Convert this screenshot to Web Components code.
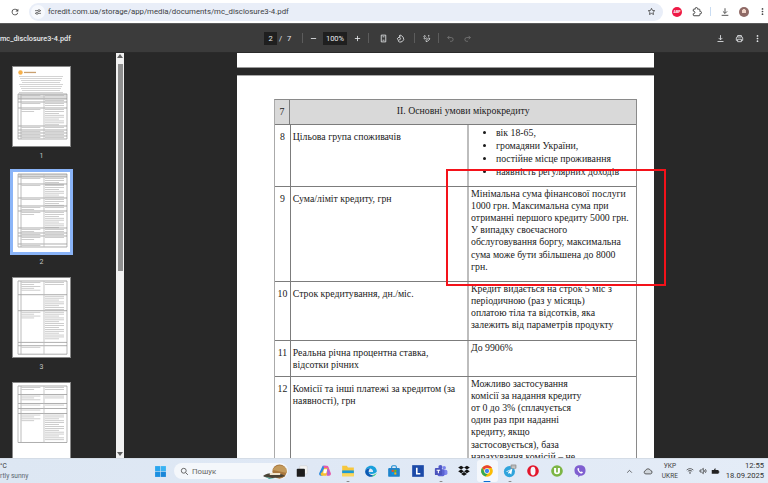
<!DOCTYPE html>
<html>
<head>
<meta charset="utf-8">
<title>mc_disclosure3-4.pdf</title>
<style>
  html, body { margin: 0; height: 100%; overflow: hidden; background: #282828; }
  body { font-family: Roboto, "Noto Sans", sans-serif; }
  svg { display: block; }
</style>
</head>
<body>
<app-shell>
  <browser-bar slot="browser" url="fcredit.com.ua/storage/app/media/documents/mc_disclosure3-4.pdf"></browser-bar>
  <pdf-toolbar slot="toolbar" file="mc_disclosure3-4.pdf" page="2" pages="7" zoom="100%"></pdf-toolbar>
  <thumb-rail slot="rail">
    <pdf-thumb label="1" kind="cover"></pdf-thumb>
    <pdf-thumb label="2" kind="terms" selected></pdf-thumb>
    <pdf-thumb label="3" kind="costs"></pdf-thumb>
    <pdf-thumb label="4" kind="rest"></pdf-thumb>
  </thumb-rail>
  <pdf-page slot="main">
    <credit-table title-num="7" title-text="ІІ. Основні умови мікрокредиту">
      <credit-row num="8" h="62">
        <span slot="label">Цільова група споживачів</span>
        <ul slot="value">
          <li>вік 18-65,</li>
          <li>громадяни України,</li>
          <li>постійне місце проживання</li>
          <li>наявність регулярних доходів</li>
        </ul>
      </credit-row>
      <credit-row num="9" h="95">
        <span slot="label">Сума/ліміт кредиту, грн</span>
        <span slot="value">Мінімальна сума фінансової послуги<br>1000 грн. Максимальна сума при<br>отриманні першого кредиту 5000 грн.<br>У випадку своєчасного<br>обслуговування боргу, максимальна<br>сума може бути збільшена до 8000<br>грн.</span>
      </credit-row>
      <credit-row num="10" h="59">
        <span slot="label">Строк кредитування, дн./міс.</span>
        <span slot="value">Кредит видається на строк 5 міс з<br>періодичною (раз у місяць)<br>оплатою тіла та відсотків, яка<br>залежить від параметрів продукту</span>
      </credit-row>
      <credit-row num="11" h="36">
        <span slot="label">Реальна річна процентна ставка,<br>відсотки річних</span>
        <span slot="value">До 9906%</span>
      </credit-row>
      <credit-row num="12" h="120">
        <span slot="label">Комісії та інші платежі за кредитом (за<br>наявності), грн</span>
        <span slot="value">Можливо застосування<br>комісії за надання кредиту<br>от 0 до 3% (сплачується<br>один раз при наданні<br>кредиту, якщо<br>застосовується), база<br>нарахування комісій – не</span>
      </credit-row>
    </credit-table>
  </pdf-page>
  <red-mark slot="mark"></red-mark>
  <task-bar slot="taskbar">
    <task-slot slot="apps" icon="taskview"></task-slot>
    <task-slot slot="apps" icon="copilot"></task-slot>
    <task-slot slot="apps" icon="folder" running></task-slot>
    <task-slot slot="apps" icon="edge"></task-slot>
    <task-slot slot="apps" icon="store"></task-slot>
    <task-slot slot="apps" icon="letter"></task-slot>
    <task-slot slot="apps" icon="teams" running></task-slot>
    <task-slot slot="apps" icon="dropbox"></task-slot>
    <task-slot slot="apps" icon="chrome" active></task-slot>
    <task-slot slot="apps" icon="telegram" running></task-slot>
    <task-slot slot="apps" icon="opera"></task-slot>
    <task-slot slot="apps" icon="utorrent"></task-slot>
    <task-slot slot="apps" icon="viber"></task-slot>
  </task-bar>
</app-shell>

<script>
const ICONS = {
  reload: '<path fill="currentColor" d="M17.65 6.35A8 8 0 1 0 19.73 14h-2.08A6 6 0 1 1 12 6c1.66 0 3.14.69 4.22 1.78L13 11h7V4z"/>',
  tune: '<g fill="none" stroke="currentColor" stroke-width="2.2"><path d="M3 8h9M18 8h3M3 16h3M12 16h9"/><circle cx="15" cy="8" r="3"/><circle cx="9" cy="16" r="3"/></g>',
  star: '<path fill="none" stroke="currentColor" stroke-width="2.2" stroke-linejoin="round" d="M12 3.5l2.6 5.6 6.1.7-4.5 4.2 1.2 6-5.4-3-5.4 3 1.2-6-4.5-4.2 6.1-.7z"/>',
  puzzle: '<path fill="none" stroke="currentColor" stroke-width="2.4" d="M20.5 11H19V7c0-1.1-.9-2-2-2h-4V3.5a2.5 2.5 0 0 0-5 0V5H4.5C3.4 5 3 5.9 3 7v3h1c1.700 0 3 1.300 3 3s-1.300 3-3 3H3v3c0 1.100.4 2 1.500 2H17c1.100 0 2-.9 2-2v-3h1.500a2.500 2.500 0 0 0 0-5z"/>',
  download: '<path fill="none" stroke="currentColor" stroke-width="2.2" d="M12 3v12M7 10.500l5 5 5-5M4 20h16"/>',
  dots: '<g fill="currentColor"><circle cx="12" cy="5" r="2.300"/><circle cx="12" cy="12" r="2.300"/><circle cx="12" cy="19" r="2.300"/></g>',
  print: '<path fill="none" stroke="currentColor" stroke-width="2.200" d="M7 8V4h10v4M7 17H3.500v-6.500A2.500 2.500 0 0 1 6 8h12a2.500 2.500 0 0 1 2.500 2.500V17H17M7 14h10v6.500H7z"/>',
  minus: '<path stroke="currentColor" stroke-width="2.200" d="M5 12h14"/>',
  plus: '<path stroke="currentColor" stroke-width="2.200" d="M5 12h14M12 5v14"/>',
  fit: '<path fill="none" stroke="currentColor" stroke-width="2.200" d="M6 3h12v18H6zM9.500 7.500h5M9.500 16.500h5"/>',
  rotate: '<g fill="none" stroke="currentColor" stroke-width="2.200"><path d="M8 5.500A8.500 8.500 0 1 1 5 18"/><path d="M12 2.500l-3.500 3 3.500 3"/><rect x="4.500" y="9.500" width="6.500" height="6.500" transform="rotate(45 7.750 12.750)"/></g>',
  annotate: '<g fill="none" stroke="currentColor" stroke-width="2.200"><path d="M4 7c3-4 6-3 4 0s-4 6-1 6 4-3 6-2"/><path d="M21 13l-7 7h-3v-3l7-7z"/><circle cx="18" cy="5" r="1"/></g>',
  undo: '<path fill="none" stroke="currentColor" stroke-width="2.200" d="M9 5L4.500 9.500 9 14M4.500 9.500H14a5 5 0 0 1 0 10h-3"/>',
  redo: '<path fill="none" stroke="currentColor" stroke-width="2.200" d="M15 5l4.500 4.500L15 14M19.500 9.500H10a5 5 0 0 0 0 10h3"/>',
  search: '<g fill="none" stroke="currentColor" stroke-width="2.600"><circle cx="10" cy="10" r="6.500"/><path d="M15 15l6 6"/></g>',
  windows: '<g fill="#1b8fe0"><rect x="2" y="2" width="9.500" height="9.500" fill="#2aa5ee"/><rect x="12.500" y="2" width="9.500" height="9.500" fill="#39b2f2"/><rect x="2" y="12.500" width="9.500" height="9.500"/><rect x="12.500" y="12.500" width="9.500" height="9.500" fill="#1a86d8"/></g>',
  taskview: '<rect x="8" y="3" width="13" height="14" rx="1.500" fill="#f4f4f4" stroke="#c8c8c8" stroke-width=".8"/><rect x="3" y="8" width="14" height="14" rx="1.500" fill="#1d1d1d"/>',
  copilot: '<path d="M8 3h5l-4 15a3 3 0 0 1-3 2H5a3 3 0 0 1-3-4z" fill="#2b8ae0"/><path d="M9 3h6a3 3 0 0 1 3 2l4 11a3 3 0 0 1-3 4h-4z" fill="#ea5aa7"/><path d="M7 14l4-7h6l-3 13H8a3 3 0 0 1-1-6z" fill="#f7c131"/><path d="M10 9h6l-2 7H9z" fill="#fff"/><path d="M15 6l6 10-4 4z" fill="#a16be0"/>',
  folder: '<path d="M2 3h8l2 3h10v15H2z" fill="#f6c73e"/><rect x="2" y="11" width="20" height="5" fill="#1a9ad6"/><rect x="2" y="16" width="20" height="5" fill="#fbd75c"/>',
  edge: '<path d="M22 13c0-6-4.500-10-10-10C6.500 3 2.500 7 2 12c2-3.500 5.500-5 8.500-4.500 3.500.5 5.500 3 5 6h-7c0 2.500 2.500 3.500 5 3.500 3 0 5.500-1 7-2.500z" fill="#1aa0dc"/><path d="M2 12c-.5 5.500 4 10 9 10 3 0 5-1 7-3-5 1.500-10-1-10-6 0-2 1-4.500 2.500-5.500C7.500 7 3.500 8.500 2 12z" fill="#0c5bb5"/><path d="M17 18c-2 2-3.500 4-6 4 5 .5 9-2 11-7-1 1-3 2.500-5 3z" fill="#43d18a"/>',
  store: '<path d="M8 7V5a2 2 0 0 1 2-2h4a2 2 0 0 1 2 2v2" fill="none" stroke="#1a8ad0" stroke-width="1.800"/><rect x="2" y="7" width="20" height="15" rx="2" fill="#1f84cc"/><rect x="8" y="10" width="3.500" height="3.500" fill="#f25022"/><rect x="12.500" y="10" width="3.500" height="3.500" fill="#7fba00"/><rect x="8" y="14.500" width="3.500" height="3.500" fill="#00a4ef"/><rect x="12.500" y="14.500" width="3.500" height="3.500" fill="#ffb900"/>',
  letter: '<rect x="2" y="2" width="20" height="20" fill="#1c4aa8"/><path d="M8.500 6.500h2.800v9h4.700V18H8.500z" fill="#fff"/>',
  teams: '<circle cx="17.500" cy="6.500" r="3" fill="#7b83eb"/><rect x="14" y="10" width="9" height="9" rx="3" fill="#7b83eb"/><circle cx="11" cy="5" r="3.500" fill="#5059c9"/><rect x="6" y="9" width="12" height="12" rx="2.500" fill="#5b63d3"/><rect x="1.500" y="7" width="12" height="12" rx="1.500" fill="#4b53bc"/><path d="M4.500 10h6v1.600H8.400V16H6.600v-4.400H4.500z" fill="#fff"/>',
  dropbox: '<path fill="#111" d="M7 3l5 3.200-5 3.200-5-3.200zM17 3l5 3.200-5 3.200-5-3.200zM2 12.600l5-3.200 5 3.200-5 3.200zM17 9.400l5 3.200-5 3.200-5-3.200zM7 17l5-3.200L17 17l-5 3.200z"/>',
  chrome: '<circle cx="12" cy="12" r="10" fill="#fbbc04"/><path d="M12 2a10 10 0 0 1 8.700 5H12a5 5 0 0 0-4.700 3.200L3.600 6.500A10 10 0 0 1 12 2z" fill="#ea4335"/><path d="M3.600 6.500L8 14.500a5 5 0 0 0 5.500 2.300L9.200 21.600A10 10 0 0 1 3.600 6.500z" fill="#34a853"/><circle cx="12" cy="12" r="4.700" fill="#fff"/><circle cx="12" cy="12" r="3.700" fill="#4285f4"/>',
  telegram: '<circle cx="11" cy="13" r="9.500" fill="#2fa4dc"/><path d="M5 12.800l11-4.500-1.800 9.500-3.200-2.500-1.700 1.700-.3-3 4.500-4-6 3.400z" fill="#fff"/><rect x="13" y="1" width="10" height="7" rx="1.500" fill="#9a9a9a"/><rect x="15" y="3" width="6" height="1.200" fill="#e0e0e0"/><rect x="15" y="5" width="6" height="1.200" fill="#e0e0e0"/>',
  opera: '<circle cx="12" cy="12" r="10" fill="#e3162b"/><ellipse cx="12" cy="12" rx="4.300" ry="7.500" fill="#f4f7fb"/>',
  utorrent: '<circle cx="12" cy="12" r="10" fill="#7cb544"/><path d="M7 7h3.500v6.500c0 1.500 3 1.500 3 0V7H17v7c0 4.500-10 4.500-10 0z" fill="#fff"/>',
  viber: '<path d="M12 2c6 0 9.500 3 9.500 9s-3.500 9-9.500 9l-3 2.500V19.500C4.500 18.500 2.500 15.500 2.500 11 2.500 5 6 2 12 2z" fill="#7f5fd0"/><path d="M8.500 7c1-.8 1.700.8 2.200 1.700.3.700-.8 1.100-.5 1.800.6 1.300 1.700 2.400 3 3 .7.300 1.100-.8 1.800-.5.900.5 2.500 1.200 1.700 2.200-1.500 2-4.500.7-6.500-1.200S6.500 8.500 8.500 7z" fill="#fff"/>',
  chevron: '<path fill="none" stroke="currentColor" stroke-width="2.400" d="M4 16l8-8 8 8"/>',
  cloud: '<path fill="#cfd5db" stroke="#333" stroke-width="1.800" d="M7 19a4 4 0 0 1-1-7.900A6.500 6.500 0 0 1 18 10.500 4.300 4.300 0 0 1 18 19z"/>',
  wifi: '<g fill="none" stroke="currentColor" stroke-width="2.200"><path d="M2 9c6-5.500 14-5.500 20 0M5.500 13c4-3.500 9-3.500 13 0M9 16.500c2-1.500 4-1.500 6 0"/></g><circle cx="12" cy="19.500" r="1.500" fill="currentColor"/>',
  speaker: '<path fill="none" stroke="currentColor" stroke-width="2.200" d="M3 9v6h4l6 5V4L7 9zM16 9c1.500 1.500 1.500 4.500 0 6M19 6.500c3 3 3 8 0 11"/>',
  battery: '<path fill="#222" d="M2 8h18v10H2zM20 11h2v4h-2z"/><path fill="#222" d="M10 4l-3 5h3l-1 4 5-6h-3l2-3z"/>',
  hat: '<circle cx="22" cy="10" r="9.500" fill="#a9783f"/><path d="M13 8c3-7 13-8 18-2l1 6z" fill="#c39a5c"/><path d="M0 16c6-6 22-5 30 0-9 3-24 4-30 0z" fill="#4a4336"/><path d="M2 16c4 3 14 4 18 3L8 20z" fill="#3ba99c"/><path d="M9 12h14v2.500H9z" fill="#f0e4cc"/>'
};

class UiIcon extends HTMLElement {
  connectedCallback() {
    const s = this.getAttribute("size") || 12;
    const w = this.getAttribute("w") || s;
    const vb = this.getAttribute("vb") || "0 0 24 24";
    this.attachShadow({ mode: "open" }).innerHTML = `
      <style>:host{display:block;width:${w}px;height:${s}px;flex:none}svg{display:block;width:100%;height:100%}</style>
      <svg viewBox="${vb}">${ICONS[this.getAttribute("name")] || ""}</svg>`;
  }
}

class AppShell extends HTMLElement {
  constructor() {
    super();
    this.attachShadow({ mode: "open" }).innerHTML = `
      <style>
        :host{display:grid;grid-template-rows:24px 29px 405px 25px;width:768px;height:483px;position:relative;overflow:hidden;background:#282828}
        .body{display:flex;min-height:0;overflow:hidden}
        ::slotted([slot=main]){margin-left:113px}
      </style>
      <slot name="browser"></slot>
      <slot name="toolbar"></slot>
      <div class="body"><slot name="rail"></slot><slot name="main"></slot></div>
      <slot name="taskbar"></slot>
      <slot name="mark"></slot>`;
  }
}

class BrowserBar extends HTMLElement {
  connectedCallback() {
    this.attachShadow({ mode: "open" }).innerHTML = `
      <style>
        :host{display:flex;align-items:center;height:23px;background:#fff;border-bottom:1px solid #5a5a5a;color:#474747}
        ui-icon.reload{margin-left:10px}
        .omni{display:flex;align-items:center;margin-left:9px;width:634px;height:18px;border-radius:9px;background:#e9eef8;box-sizing:border-box;padding:0 7px 0 2px}
        .chip{width:14px;height:14px;border-radius:7px;background:#f7f9fd;display:flex;align-items:center;justify-content:center;margin-right:3px}
        .url{font:7.800px Roboto,sans-serif;color:#3c4043;white-space:nowrap;flex:1}
        .abp{width:10px;height:10px;border-radius:5px;background:#ee1a46;color:#fff;font:bold 3.500px Roboto,sans-serif;display:flex;align-items:center;justify-content:center;margin-left:9px}
        .sep{width:1px;height:9px;background:#c9dcf2;margin:0 9px 0 8px}
        .avatar{width:10px;height:10px;border-radius:5px;background:radial-gradient(circle at 50% 42%,#f0d4c8 0 28%,#8f6a66 30% 100%);margin:0 9px 0 9px}
      </style>
      <ui-icon class="reload" name="reload" size="10"></ui-icon>
      <div class="omni">
        <span class="chip"><ui-icon name="tune" size="8"></ui-icon></span>
        <span class="url">${this.getAttribute("url")}</span>
        <ui-icon name="star" size="9"></ui-icon>
      </div>
      <span class="abp">ABP</span>
      <ui-icon name="puzzle" size="10" style="margin-left:10px"></ui-icon>
      <span class="sep"></span>
      <ui-icon name="download" size="10"></ui-icon>
      <span class="avatar"></span>
      <ui-icon name="dots" size="9"></ui-icon>`;
  }
}

class PdfToolbar extends HTMLElement {
  connectedCallback() {
    const a = n => this.getAttribute(n);
    const btn = (name, ml, extra = "") => `<span class="btn" style="margin-left:${ml}px;${extra}"><ui-icon name="${name}" size="9"></ui-icon></span>`;
    this.attachShadow({ mode: "open" }).innerHTML = `
      <style>
        :host{display:flex;align-items:center;height:29px;background:#3b3b3b;border-bottom:1px solid #2a2a2a;box-sizing:border-box;color:#e8eaed;font:7.500px Roboto,sans-serif}
        .title{width:264px;font-weight:500;font-size:7.300px;white-space:nowrap}
        .box{background:#1f1f1f;height:13px;display:flex;align-items:center;justify-content:center}
        .btn{width:16px;display:flex;justify-content:center;color:#e8eaed}
        .sep{width:1px;height:10px;background:#5c5c5c}
        .off{color:#7a7a7a}
        .right{margin-left:auto;display:flex;margin-right:3px}
      </style>
      <span class="title">${a("file")}</span>
      <span class="box" style="width:13px">${a("page")}</span>
      <span style="margin-left:2px;width:8px">/</span><span style="width:7px">${a("pages")}</span>
      <span class="sep" style="margin-left:8px"></span>
      ${btn("minus", 2)}
      <span class="box" style="width:24px;margin-left:2px">${a("zoom")}</span>
      ${btn("plus", 2)}
      <span class="sep" style="margin-left:3px"></span>
      ${btn("fit", 6)}
      ${btn("rotate", 1)}
      <span class="sep" style="margin-left:6px"></span>
      ${btn("annotate", 3)}
      <span class="sep" style="margin-left:4px"></span>
      <span class="off" style="display:flex">${btn("undo", 3, "color:#7a7a7a")}${btn("redo", 1, "color:#7a7a7a")}</span>
      <span class="right">${btn("download", 0)}${btn("print", 3)}${btn("dots", 2)}</span>`;
  }
}

class ThumbRail extends HTMLElement {
  constructor() {
    super();
    this.attachShadow({ mode: "open" }).innerHTML = `
      <style>
        :host{display:flex;width:124px;flex:none;height:405px;overflow:hidden}
        .list{width:116px;margin-left:0;padding-top:13.700px;box-sizing:border-box}
        .bar{width:8px;background:#f1f1f1;display:flex;flex-direction:column;align-items:center}
        .up,.down{width:0;height:0;border-left:3px solid transparent;border-right:3px solid transparent}
        .up{border-bottom:4px solid #606060;margin-top:1px}
        .down{border-top:4px solid #606060;margin-top:auto;margin-bottom:2px}
        .thumb{width:5px;height:207px;background:#8f8f8f;margin-top:6px}
      </style>
      <div class="list"><slot></slot></div>
      <div class="bar"><span class="up"></span><span class="thumb"></span><span class="down"></span></div>`;
  }
}

// miniature pages: [height, label lines, value lines] per row, just enough to read as a table at this scale
function tableLines(rows, top, left, right, mid) {
  let out = "";
  let y = top;
  for (const [h, lab, val] of rows) {
    out += `<path d="M${left} ${y}H${right}" stroke="#777" stroke-width=".6"/>`;
    for (let i = 0; i < lab; i++) out += `<rect x="${left + 3.500}" y="${y + 1.200 + i * 1.900}" width="${(mid - left - 5) * (i % 2 ? 0.6 : 0.9)}" height=".7" fill="#b8b8b8"/>`;
    for (let i = 0; i < val; i++) out += `<rect x="${mid + 1}" y="${y + 1.200 + i * 1.900}" width="${(right - mid - 3) * (i % 3 == 2 ? 0.7 : 0.95)}" height=".7" fill="#b8b8b8"/>`;
    y += h;
  }
  out += `<path d="M${left} ${y}H${right}" stroke="#777" stroke-width=".6"/>`;
  out += `<path d="M${left} ${top}V${y}M${left + 3} ${top}V${y}" stroke="#aaa" stroke-width=".8"/><path d="M${right} ${top}V${y}" stroke="#888" stroke-width=".6"/><path d="M${mid} ${top}V${y}" stroke="#bbb" stroke-width=".8"/>`;
  return out;
}
const THUMBS = {
  cover() {
    let s = `<circle cx="7.500" cy="5.500" r="2.200" fill="#f6b04a"/><rect x="11" y="4.800" width="12" height="1.300" fill="#c9a070"/>`;
    for (let i = 0; i < 9; i++) s += `<rect x="${6 + (i % 4)}" y="${9 + i * 2}" width="${44 - (i % 4) * 2}" height=".7" fill="#c2c2c2"/>`;
    s += `<rect x="5" y="27" width="49" height="5" fill="#ddd"/>`;
    return s + tableLines([[5, 1, 1], [3, 0, 1], [6, 1, 2], [18, 2, 9], [4, 1, 1], [3, 1, 1], [3, 1, 1], [3, 1, 1]], 27, 5, 54, 31);
  },
  terms() {
    return `<rect x="5" y="2" width="49" height="3" fill="#ddd"/>` + tableLines([[3, 0, 0], [7, 1, 4], [14, 1, 7], [8, 1, 4], [5, 2, 1], [17, 2, 9], [5, 2, 2], [3, 1, 1], [8, 2, 1], [3, 1, 0]], 2, 5, 54, 31);
  },
  costs() {
    return tableLines([[13.700, 5, 2], [16, 0, 8], [31.700, 4, 15], [3.300, 0, 0], [8.500, 1, 0]], 3, 5, 54, 31);
  },
  rest() {
    return tableLines([[8.500, 2, 2], [9, 3, 2], [5, 1, 1], [5, 1, 0], [29, 4, 14]], 3, 5, 54, 31);
  }
};

class PdfThumb extends HTMLElement {
  connectedCallback() {
    const sel = this.hasAttribute("selected");
    this.attachShadow({ mode: "open" }).innerHTML = `
      <style>
        :host{display:flex;flex-direction:column;align-items:flex-start;height:105.600px;padding-left:13px;box-sizing:border-box}
        .page{width:57px;height:79.300px;background:#fff;outline:${sel ? "3.500px solid #8ab4f8" : "1px solid #8a8a8a"};outline-offset:${sel ? "0" : "-.5px"}}
        svg{display:block;width:100%;height:100%}
        .label{width:57px;margin-top:6px;text-align:center;font:7px Roboto,sans-serif;color:#c4c7c5}
      </style>
      <div class="page"><svg viewBox="0 0 57 79.300">${THUMBS[this.getAttribute("kind")]()}</svg></div>
      <div class="label">${this.getAttribute("label")}</div>`;
  }
}

class PdfPage extends HTMLElement {
  constructor() {
    super();
    this.attachShadow({ mode: "open" }).innerHTML = `
      <style>
        :host{display:block;width:416.500px;flex:none;height:405px;overflow:hidden}
        .prev{height:13.500px;background:#fff;border-bottom:.5px solid #999}
        .cur{margin-top:7px;height:400px;background:#fff;border-top:1px solid #aaa;padding:23px 16px 0 36.500px;box-sizing:border-box}
      </style>
      <div class="prev"></div>
      <div class="cur"><slot></slot></div>`;
  }
}

class CreditTable extends HTMLElement {
  connectedCallback() {
    this.attachShadow({ mode: "open" }).innerHTML = `
      <style>
        :host{display:block;width:363.500px;border:solid #8a8a8a;border-width:1px 1px 0 1.500px;border-left-color:#aaa;box-sizing:border-box;font:9.800px/12.200px "Liberation Serif",serif;color:#1a1a1a}
        .head{display:grid;grid-template-columns:15.800px 1fr;height:24px;background:#d9d9d9;border-bottom:1px solid #7c7c7c;align-items:center;text-align:center}
        .head span:first-child{height:100%;line-height:24px;border-right:1px solid #7c7c7c}
      </style>
      <div class="head"><span>${this.getAttribute("title-num")}</span><span>${this.getAttribute("title-text")}</span></div>
      <slot></slot>`;
  }
}

class CreditRow extends HTMLElement {
  connectedCallback() {
    const h = this.getAttribute("h");
    this.attachShadow({ mode: "open" }).innerHTML = `
      <style>
        :host{display:grid;grid-template-columns:16.800px 177.700px 1fr;height:${h}px;box-sizing:border-box;border-bottom:1px solid #7c7c7c}
        .num{border-right:1px solid #7c7c7c;text-align:center;padding-top:6px}
        .label{padding:6px 2px 0 1.500px;border-right:2px solid #bdbdbd}
        .value{padding:1px 3px 0 2px;white-space:nowrap}
        ::slotted(ul){margin:0;padding:0 0 0 25px;line-height:13.100px}
      </style>
      <div class="num">${this.getAttribute("num")}</div>
      <div class="label"><slot name="label"></slot></div>
      <div class="value"><slot name="value"></slot></div>`;
  }
}

class RedMark extends HTMLElement {
  constructor() {
    super();
    this.attachShadow({ mode: "open" }).innerHTML = `
      <style>:host{position:absolute;left:446px;top:169px;width:220px;height:117px;box-sizing:border-box;border:2px solid #f4121a}</style>`;
  }
}

class TaskSlot extends HTMLElement {
  connectedCallback() {
    const active = this.hasAttribute("active");
    const run = active || this.hasAttribute("running");
    this.attachShadow({ mode: "open" }).innerHTML = `
      <style>
        :host{display:flex;width:23.200px;height:25px;align-items:center;justify-content:center;position:relative;flex:none}
        .bg{width:21px;height:22px;border-radius:3px;display:flex;align-items:center;justify-content:center;${active ? "background:rgba(255,255,255,.65)" : ""}}
        .pip{position:absolute;bottom:1.500px;left:50%;transform:translateX(-50%);height:1.500px;border-radius:1px;width:${active ? 7 : 3}px;background:${active ? "#0a6cd4" : "#8a8a8a"};display:${run ? "block" : "none"}}
      </style>
      <div class="bg"><ui-icon name="${this.getAttribute("icon")}" size="14"></ui-icon></div>
      <span class="pip"></span>`;
  }
}

class TaskBar extends HTMLElement {
  constructor() {
    super();
    this.attachShadow({ mode: "open" }).innerHTML = `
      <style>
        :host{display:flex;align-items:center;height:25px;background:linear-gradient(90deg,#dde7f3,#dfe8f5 40%,#e4ecf7);border-top:1px solid #d4dce6;box-sizing:border-box;color:#222;font:6.600px Roboto,sans-serif}
        .weather{width:154px;flex:none;line-height:10px;color:#333}
        .weather div + div{color:#5b6670}
        .search{display:flex;align-items:center;width:114px;height:16px;border-radius:8px;background:#f4f7fb;margin-left:7px;box-sizing:border-box;padding-left:6px;color:#666;flex:none;overflow:hidden}
        .search span{margin-left:3px;flex:1;font-size:7.800px}
        .apps{display:flex;margin-left:2px}
        .tray{display:flex;align-items:center;margin-left:auto;color:#333}
        .lang{text-align:center;line-height:10px;font-size:6.500px;margin:0 8px 0 9px;color:#444}
        .clock{text-align:right;line-height:10.500px;font-size:7.600px;margin:0 4px 0 6px;color:#333}
      </style>
      <div class="weather"><div>°C</div><div>rtly sunny</div></div>
      <ui-icon name="windows" size="13"></ui-icon>
      <div class="search"><ui-icon name="search" size="9"></ui-icon><span>Пошук</span><ui-icon name="hat" size="15" w="26" vb="0 0 32 20"></ui-icon></div>
      <div class="apps"><slot name="apps"></slot></div>
      <div class="tray">
        <ui-icon name="chevron" size="7"></ui-icon>
        <ui-icon name="cloud" size="10" style="margin-left:10px"></ui-icon>
        <div class="lang">УКР<br>UKRE</div>
        <ui-icon name="wifi" size="8"></ui-icon>
        <ui-icon name="speaker" size="8" style="margin-left:5px"></ui-icon>
        <ui-icon name="battery" size="9" style="margin-left:4px"></ui-icon>
        <div class="clock">12:55<br>18.09.2025</div>
      </div>`;
  }
}

customElements.define("ui-icon", UiIcon);
customElements.define("app-shell", AppShell);
customElements.define("browser-bar", BrowserBar);
customElements.define("pdf-toolbar", PdfToolbar);
customElements.define("thumb-rail", ThumbRail);
customElements.define("pdf-thumb", PdfThumb);
customElements.define("pdf-page", PdfPage);
customElements.define("credit-table", CreditTable);
customElements.define("credit-row", CreditRow);
customElements.define("red-mark", RedMark);
customElements.define("task-slot", TaskSlot);
customElements.define("task-bar", TaskBar);
</script>
</body>
</html>
